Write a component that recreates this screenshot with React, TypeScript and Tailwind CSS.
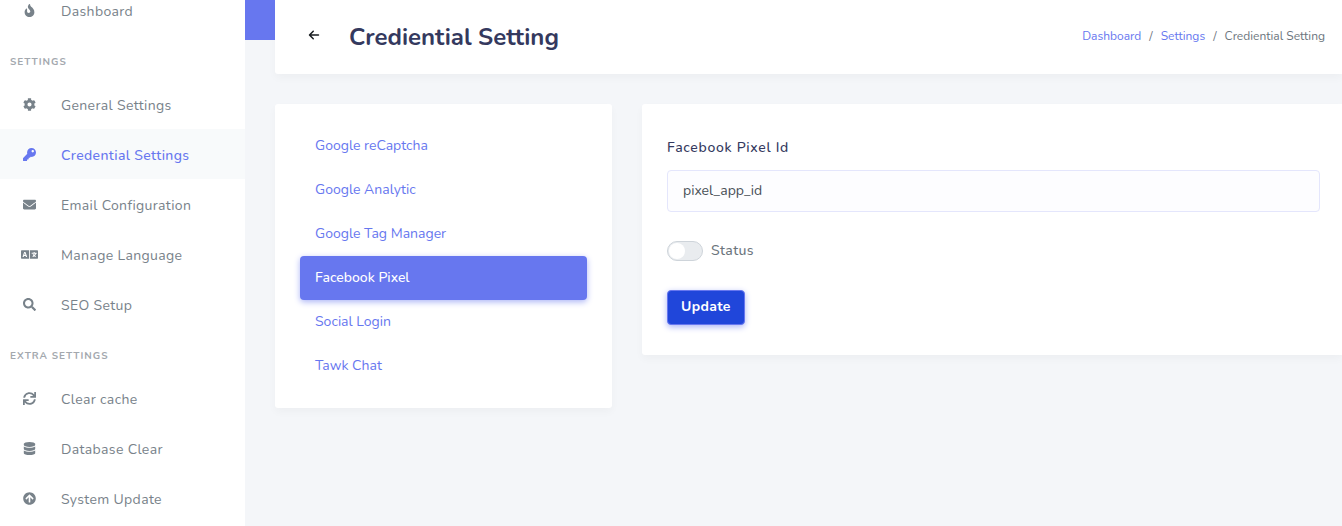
import { useState } from 'react';
import type { IconType } from 'react-icons';
import {
    FaArrowCircleUp,
    FaCog,
    FaDatabase,
    FaEnvelope,
    FaFire,
    FaKey,
    FaLanguage,
    FaSearch,
    FaSync,
} from 'react-icons/fa';
import { FaArrowLeft } from 'react-icons/fa6';

interface MenuItem {
    label: string;
    icon: IconType;
}

const settingsMenu: MenuItem[] = [
    { label: 'General Settings', icon: FaCog },
    { label: 'Credential Settings', icon: FaKey },
    { label: 'Email Configuration', icon: FaEnvelope },
    { label: 'Manage Language', icon: FaLanguage },
    { label: 'SEO Setup', icon: FaSearch },
];

const extraMenu: MenuItem[] = [
    { label: 'Clear cache', icon: FaSync },
    { label: 'Database Clear', icon: FaDatabase },
    { label: 'System Update', icon: FaArrowCircleUp },
];

const tabs = [
    'Google reCaptcha',
    'Google Analytic',
    'Google Tag Manager',
    'Facebook Pixel',
    'Social Login',
    'Tawk Chat',
];

function MenuHeader({ title }: { title: string }) {
    return (
        <h2 className="h-11 pl-2.5 pt-2.5 flex items-center text-[10px] font-bold uppercase tracking-widest text-[#a3a8ae]">
            {title}
        </h2>
    );
}

function MenuLink({ item, active }: { item: MenuItem; active?: boolean }) {
    const Icon = item.icon;
    return (
        <a
            href="#"
            className={`h-[50px] flex items-center text-sm tracking-wide ${active ? 'bg-[#f8fafb] text-[#6777ef] font-medium' : 'text-[#78828a]'}`}
        >
            <span className="w-[59px] mr-0.5 flex justify-center">
                <Icon className={item.icon === FaLanguage ? 'size-[17px]' : 'size-[13px]'} />
            </span>
            <span className="pt-1">{item.label}</span>
        </a>
    );
}

export default function App() {
    const [activeTab, setActiveTab] = useState('Facebook Pixel');
    const [pixelId, setPixelId] = useState('pixel_app_id');
    const [status, setStatus] = useState(false);

    return (
        <div className="flex h-screen overflow-hidden bg-[#f4f6f9] font-['Nunito','Lato',sans-serif] text-[#6c757d]">
            <aside className="w-[245px] shrink-0 overflow-hidden bg-white">
                <nav className="-mt-[15px]">
                    <MenuLink item={{ label: 'Dashboard', icon: FaFire }} />
                    <MenuHeader title="Settings" />
                    {settingsMenu.map((item) => (
                        <MenuLink key={item.label} item={item} active={item.label === 'Credential Settings'} />
                    ))}
                    <MenuHeader title="Extra Settings" />
                    {extraMenu.map((item) => (
                        <MenuLink key={item.label} item={item} />
                    ))}
                </nav>
            </aside>

            <main className="relative min-w-0 flex-1 pl-[30px]">
                <div className="absolute inset-x-0 top-0 h-10 bg-[#6777ef]" />

                <header className="relative mb-[30px] flex h-[74px] items-center rounded-bl-[3px] bg-white pl-[33px] pr-[17px] shadow-[0_4px_8px_rgba(0,0,0,0.03)]">
                    <a href="#" aria-label="Back" className="pb-1 text-[#191d21]">
                        <FaArrowLeft className="size-3" />
                    </a>
                    <h1 className="ml-[29px] text-2xl font-bold text-[#34395e]">Crediential Setting</h1>
                    <nav className="ml-auto flex gap-2 pb-0.5 text-xs">
                        <a href="#" className="text-[#6777ef]">Dashboard</a>
                        <span>/</span>
                        <a href="#" className="text-[#6777ef]">Settings</a>
                        <span>/</span>
                        <span>Crediential Setting</span>
                    </nav>
                </header>

                <div className="grid grid-cols-[337fr_700fr] items-start gap-[30px]">
                    <div className="rounded-[3px] bg-white px-[25px] py-5 shadow-[0_4px_8px_rgba(0,0,0,0.03)]">
                        <div className="flex flex-col">
                            {tabs.map((tab) => (
                                <button
                                    key={tab}
                                    type="button"
                                    onClick={() => setActiveTab(tab)}
                                    className={`h-11 rounded px-[15px] text-left text-sm ${
                                        tab === activeTab
                                            ? 'bg-[#6777ef] font-medium text-white shadow-[0_2px_6px_#acb5f6]'
                                            : 'text-[#6777ef]'
                                    }`}
                                >
                                    {tab}
                                </button>
                            ))}
                        </div>
                    </div>

                    <form
                        onSubmit={(e) => e.preventDefault()}
                        className="rounded-l-[3px] bg-white pb-[30px] pl-[25px] pr-[22px] pt-[34px] shadow-[0_4px_8px_rgba(0,0,0,0.03)]"
                    >
                        <label htmlFor="pixel-id" className="block text-sm font-medium tracking-wider text-[#34395e]">
                            Facebook Pixel Id
                        </label>
                        <input
                            id="pixel-id"
                            type="text"
                            value={pixelId}
                            onChange={(e) => setPixelId(e.target.value)}
                            className="mt-3 h-[42px] w-full rounded border border-[#e4e6fc] bg-[#fdfdff] px-[15px] pb-0.5 text-sm text-[#495057] outline-none"
                        />
                        <label className="mt-[29px] flex items-center gap-2 text-sm font-medium tracking-wide">
                            <input
                                type="checkbox"
                                checked={status}
                                onChange={(e) => setStatus(e.target.checked)}
                                className="h-5 w-9 appearance-none rounded-full border border-[#ced4da] bg-[#e9ecef] p-px before:block before:size-4 before:rounded-full before:bg-white checked:bg-[#6777ef] checked:before:ml-4"
                            />
                            Status
                        </label>
                        <button
                            type="submit"
                            className="mt-[29px] h-[35px] rounded border border-[#6777ef] bg-[#2046da] px-[13px] pb-0.5 text-sm font-bold tracking-wide text-white shadow-[0_2px_6px_#acb5f6]"
                        >
                            Update
                        </button>
                    </form>
                </div>
            </main>
        </div>
    );
}
